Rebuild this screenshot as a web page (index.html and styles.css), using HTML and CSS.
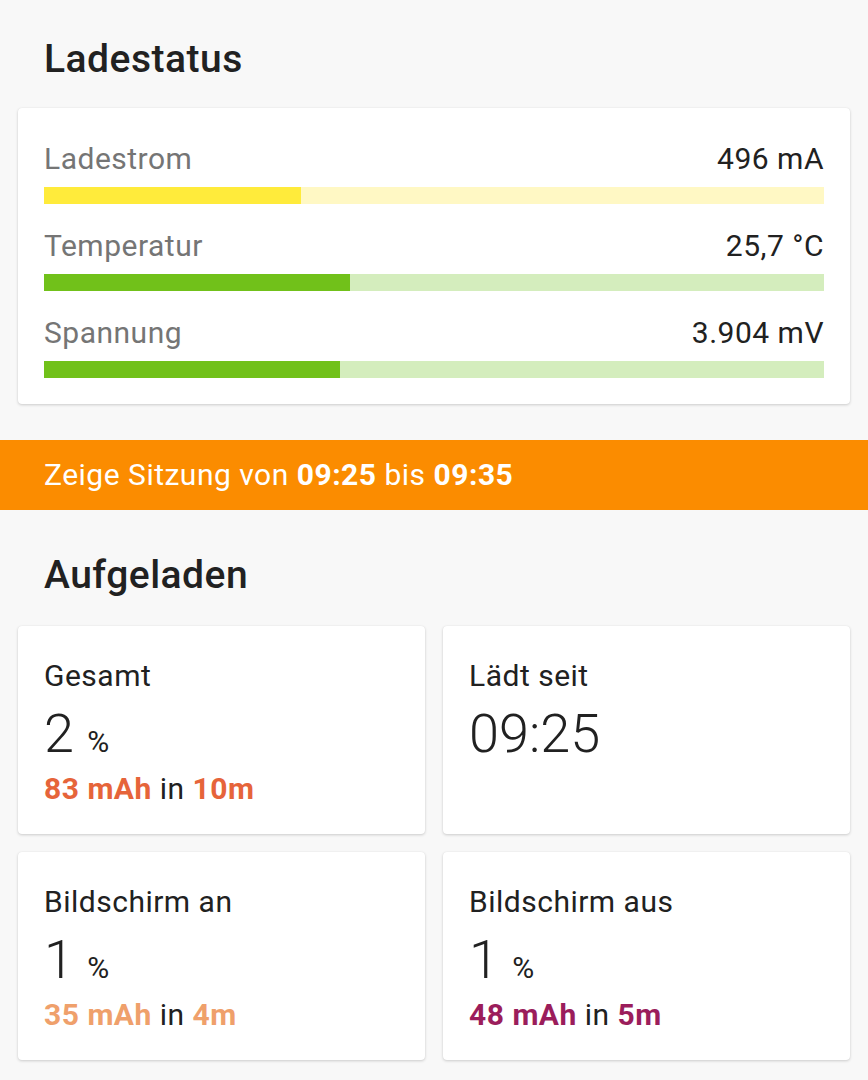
FILE: index.html
```html
<!DOCTYPE html>
<html lang="de">
<head>
    <meta charset="UTF-8">
    <meta name="viewport" content="width=device-width, initial-scale=1.0">
    <title>Ladestatus</title>
    <link rel="stylesheet" href="styles.css">
</head>
<body>
    <h2 class="section-title first">Ladestatus</h2>
    <div class="card status-card">
        <div class="stat-row">
            <div class="stat-head">
                <span class="stat-label">Ladestrom</span>
                <span class="stat-value">496 mA</span>
            </div>
            <div class="bar bar-yellow"><div class="bar-fill" style="width: 33%"></div></div>
        </div>
        <div class="stat-row">
            <div class="stat-head">
                <span class="stat-label">Temperatur</span>
                <span class="stat-value">25,7 °C</span>
            </div>
            <div class="bar bar-green"><div class="bar-fill" style="width: 39.2%"></div></div>
        </div>
        <div class="stat-row">
            <div class="stat-head">
                <span class="stat-label">Spannung</span>
                <span class="stat-value">3.904 mV</span>
            </div>
            <div class="bar bar-green"><div class="bar-fill" style="width: 38%"></div></div>
        </div>
    </div>

    <div class="session-banner">Zeige Sitzung von <b>09:25</b> bis <b>09:35</b></div>

    <h2 class="section-title">Aufgeladen</h2>
    <div class="charge-grid">
        <div class="card charge-card">
            <div class="charge-label">Gesamt</div>
            <div class="charge-big">2 <span class="unit">%</span></div>
            <div class="charge-detail total"><b>83 mAh</b> in <b>10m</b></div>
        </div>
        <div class="card charge-card">
            <div class="charge-label">Lädt seit</div>
            <div class="charge-big">09:25</div>
        </div>
        <div class="card charge-card">
            <div class="charge-label">Bildschirm an</div>
            <div class="charge-big">1 <span class="unit">%</span></div>
            <div class="charge-detail screen-on"><b>35 mAh</b> in <b>4m</b></div>
        </div>
        <div class="card charge-card">
            <div class="charge-label">Bildschirm aus</div>
            <div class="charge-big">1 <span class="unit">%</span></div>
            <div class="charge-detail screen-off"><b>48 mAh</b> in <b>5m</b></div>
        </div>
    </div>
</body>
</html>
```

FILE: styles.css
```css
body {
    font-family: Roboto, "Noto Sans", sans-serif;
    background-color: #f8f8f8;
    color: #212121;
    letter-spacing: 0.5px;
    margin: 0;
    padding: 0 0 40px;
}
.section-title {
    font-size: 39px;
    line-height: 44px;
    font-weight: 500;
    margin: 43px 0 29px;
    padding-left: 44px;
}
.section-title.first {
    margin: 37px 0 27px;
}
.card {
    background: white;
    border-radius: 4px;
    box-shadow: 0 1px 3px rgba(0, 0, 0, 0.18), 0 0 1px rgba(0, 0, 0, 0.08);
}
.status-card {
    margin: 0 18px;
    padding: 34px 26px 26px;
}
.stat-row {
    margin-bottom: 25px;
}
.stat-row:last-child {
    margin-bottom: 0;
}
.stat-head {
    display: flex;
    justify-content: space-between;
    font-size: 30px;
    line-height: 34px;
}
.stat-label {
    color: #757575;
}
.bar {
    height: 17px;
    margin-top: 11px;
}
.bar-fill {
    height: 100%;
}
.bar-yellow {
    background-color: #fff8c4;
}
.bar-yellow .bar-fill {
    background-color: #ffeb3b;
}
.bar-green {
    background-color: #d4edbd;
}
.bar-green .bar-fill {
    background-color: #71c11a;
}
.session-banner {
    margin-top: 36px;
    height: 70px;
    line-height: 70px;
    background-color: #fb8c00;
    color: white;
    font-size: 30px;
    padding-left: 44px;
}
.session-banner b {
    font-weight: 700;
}
.charge-grid {
    display: grid;
    grid-template-columns: 1fr 1fr;
    grid-auto-rows: 208px;
    gap: 18px;
    margin: 0 18px;
}
.charge-card {
    padding: 33px 26px 0;
}
.charge-label {
    font-size: 30px;
    line-height: 34px;
}
.charge-big {
    font-size: 54px;
    line-height: 56px;
    font-weight: 300;
    letter-spacing: 0;
    margin-top: 13px;
}
.charge-big .unit {
    font-size: 30px;
    line-height: 1;
    font-weight: 400;
}
.charge-detail {
    font-size: 30px;
    line-height: 34px;
    margin-top: 10px;
}
.charge-detail b {
    font-weight: 700;
}
.total b {
    color: #e6643a;
}
.screen-on b {
    color: #efa06b;
}
.screen-off b {
    color: #9b1d5b;
}
```
